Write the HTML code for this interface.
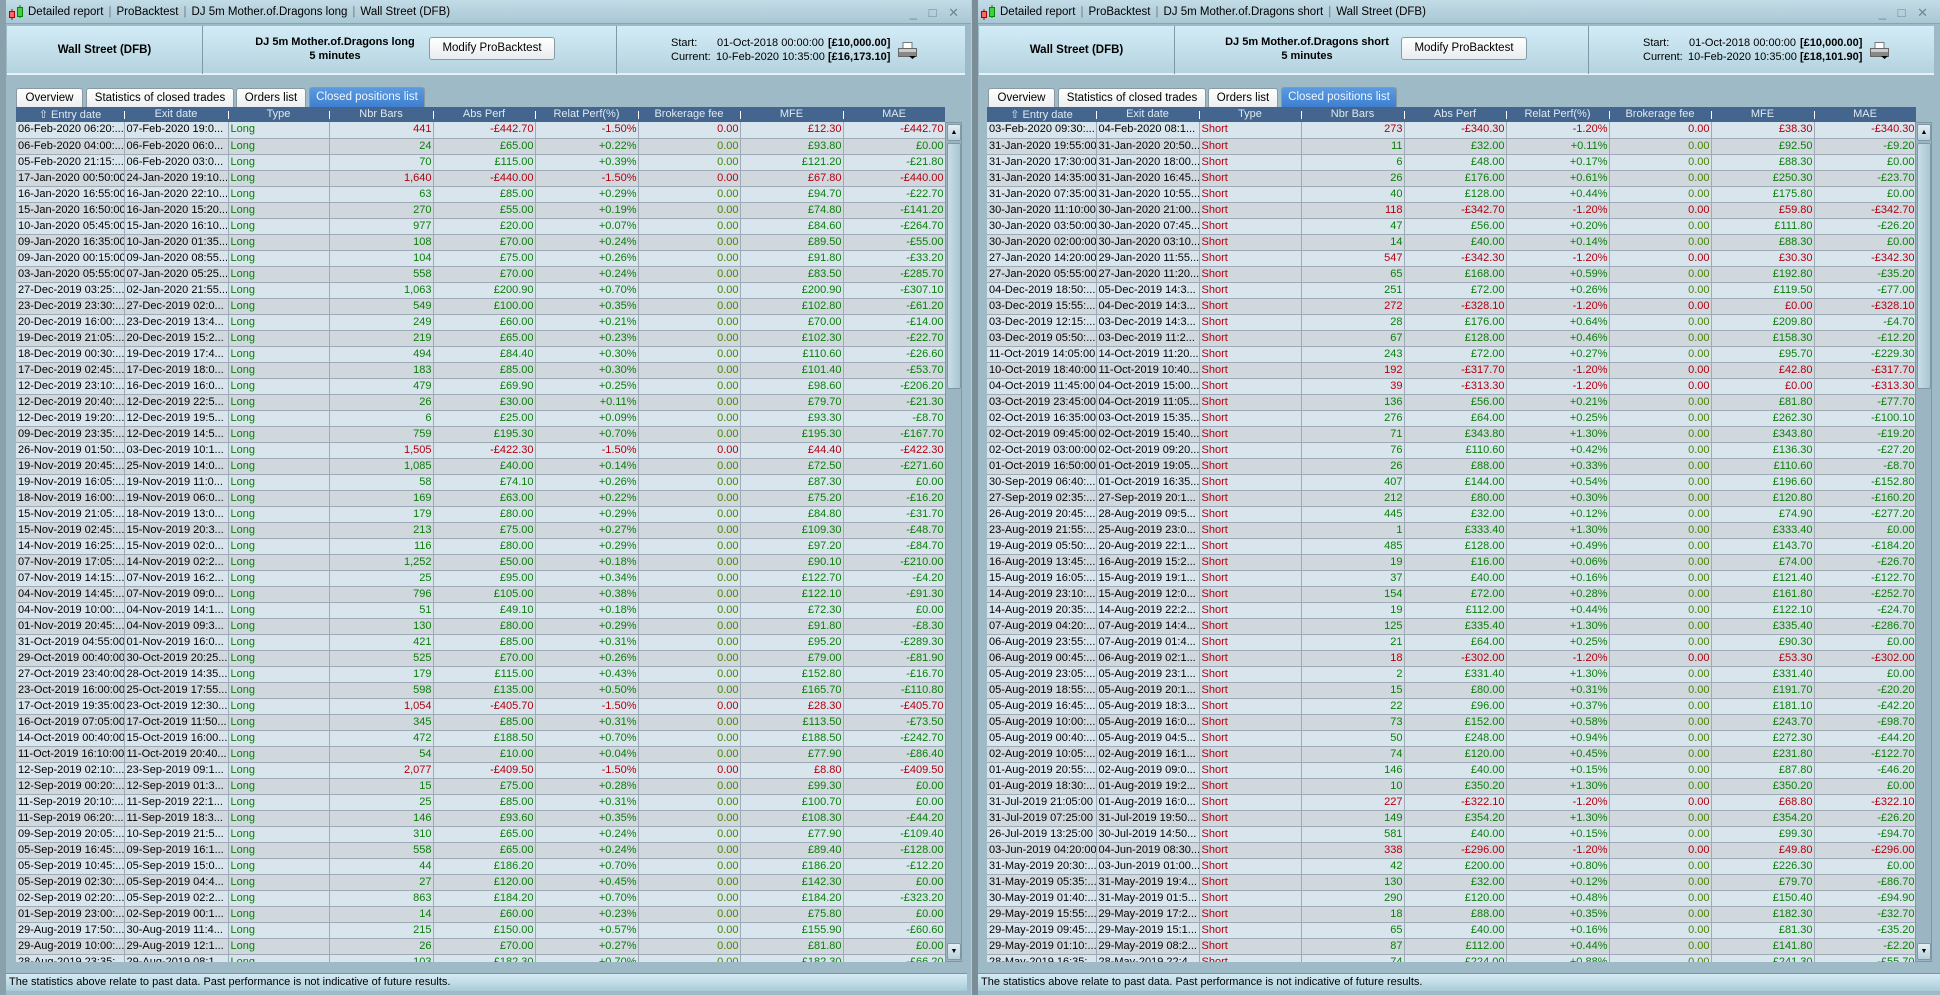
<!DOCTYPE html>
<html><head><meta charset="utf-8"><style>
*{box-sizing:border-box;margin:0;padding:0}
body{width:1940px;height:995px;overflow:hidden;background:#7f939d;font-family:"Liberation Sans",sans-serif;font-size:11px;color:#000;position:relative}
.p{position:absolute;top:0;height:995px;background:#9fbac7}
.tb{position:absolute;left:0;right:0;top:0;height:24px;background:linear-gradient(#c3dce7,#a9c7d4);border-bottom:1px solid #8aa4b0}
.tb .t{position:absolute;left:22px;top:6px;font-size:11.5px;white-space:nowrap}
.tb .t i{font-style:normal;color:#777;margin:0 5px}
.ic{position:absolute;left:2px;top:5px;width:18px;height:15px}
.wc{position:absolute;right:8px;top:5px;font-size:13px;color:#6f8792;letter-spacing:4px}
.hd{position:absolute;left:1px;right:6px;top:26px;height:49px;background:linear-gradient(#d3ecf7,#b4d3df);border-bottom:2px solid #e8f2f6}
.hd .s1{position:absolute;left:0;width:196px;top:0;height:48px;border-right:1px solid #7f9aa6;text-align:center;font-weight:bold;font-size:11.5px;line-height:48px}
.hd .s2{position:absolute;left:197px;width:413px;top:0;height:48px;border-right:1px solid #7f9aa6}
.hd .tt{position:absolute;left:0;width:262px;top:9px;text-align:center;font-weight:bold;font-size:11px;line-height:14px;white-space:nowrap}
.btn{position:absolute;left:225px;top:11px;width:126px;height:23px;background:linear-gradient(#fff,#e8ecee);border:1px solid #8a9aa3;border-radius:3px;text-align:center;line-height:21px;font-size:11.5px}
.sl{position:absolute;font-size:11px;white-space:nowrap;line-height:14px}
.pr{position:absolute;left:891px;top:16px}
.tabs{position:absolute;top:88px;height:19px}
.tab{position:absolute;top:0;height:19px;background:linear-gradient(#fff,#eceeef);border:1px solid #8a9aa3;border-bottom:none;border-radius:3px 3px 0 0;text-align:center;line-height:18px;font-size:11.5px}
.tab.a{background:linear-gradient(#5a9be0,#3f7fd0);color:#f0f6ff;top:-1px;height:20px}
table{position:absolute;left:10px;top:107px;border-collapse:collapse;table-layout:fixed;width:929px}
th{background:#44668e;color:#dfe8f2;font-weight:normal;height:15px;font-size:11px;border-bottom:1px solid #e6eef3;position:relative}
th+th:before{content:"";position:absolute;left:0;top:4px;height:8px;width:1px;background:#fff}
td{height:16px;border-right:1px solid #9eabb6;border-bottom:1px solid #9eabb6;white-space:nowrap;overflow:hidden;padding:0 1px 0 2px;font-size:11px;line-height:15px}
tr:nth-child(odd) td{background:#d9e5ed}tr:nth-child(even) td{background:#d0d8de}
td:nth-child(n+4){text-align:right}
td:nth-child(3),td:nth-child(n+4){color:#0a7d0a}
td:nth-child(7){color:#4a8200}
tr.l td:nth-child(n+4){color:#b00010}
.S td:nth-child(3){color:#b00010}
.tw{position:absolute;left:10px;top:122px;height:840px;width:929px;overflow:hidden}
.tw table{position:static}
.sb{position:absolute;left:939px;top:122px;width:17px;height:840px;background:#9bb5c2;border:1px solid #7e97a3}
.sb .u,.sb .d{position:absolute;left:1px;width:14px;height:17px;background:linear-gradient(#e4eff4,#b9d0da);border:1px solid #7f98a4;border-radius:2px;font-size:7px;text-align:center;line-height:15px}
.sb .u{top:1px}.sb .d{bottom:1px}
.sb .th{position:absolute;left:1px;top:20px;width:14px;height:246px;background:linear-gradient(90deg,#c9dde6,#aac6d2);border:1px solid #7f98a4;border-radius:2px}
.ft{position:absolute;left:0;right:4px;top:973px;height:18px;background:linear-gradient(#d7ecf5,#a9cbd8);border-top:1px solid #7a939f;padding-left:3px;line-height:17px;font-size:11px}
</style></head><body>

<div class="p" style="left:0;width:971px">
<div style="position:absolute;left:0;top:0;width:6px;height:995px;background:#8aa1ac"></div>
<div style="position:absolute;left:6px;top:0;width:965px;height:995px">
<div class="tb"><svg class="ic" viewBox="0 0 18 15"><line x1="4" y1="4" x2="4" y2="15" stroke="#b00"/><rect x="1.5" y="6.5" width="5" height="6" fill="#f66" stroke="#a00"/><line x1="12" y1="0" x2="12" y2="13" stroke="#080"/><rect x="9.5" y="2.5" width="5" height="9" fill="#4c4" stroke="#080"/></svg><div class="t">Detailed report<i>|</i>ProBacktest<i>|</i>DJ 5m Mother.of.Dragons long<i>|</i>Wall Street (DFB)</div><div class="wc">_ □ ✕</div></div>
<div class="hd"><div class="s1">Wall Street (DFB)</div><div class="s2"><div class="tt">DJ 5m Mother.of.Dragons long<br>5 minutes</div><div class="btn">Modify ProBacktest</div></div>
<div class="sl" style="left:664px;top:10px">Start:</div><div class="sl" style="left:664px;top:24px">Current:</div>
<div class="sl" style="left:710px;top:10px">01-Oct-2018 00:00:00</div><div class="sl" style="left:709px;top:24px">10-Feb-2020 10:35:00</div>
<div class="sl" style="left:821px;top:10px"><b>[£10,000.00]</b></div><div class="sl" style="left:821px;top:24px"><b>[£16,173.10]</b></div>
<svg class="pr" width="20" height="18" viewBox="0 0 20 18"><rect x="5" y="0.5" width="9" height="6" fill="#fff" stroke="#777"/><rect x="0.5" y="6.5" width="18" height="8" fill="#c7ccd0" stroke="#666"/><rect x="1" y="10" width="17" height="4" fill="#888"/><path d="M11 14h7l-3.5 3z" fill="#000"/></svg></div>
<div class="tabs"><div class="tab" style="left:10px;width:67px">Overview</div><div class="tab" style="left:80px;width:148px">Statistics of closed trades</div><div class="tab" style="left:230px;width:70px">Orders list</div><div class="tab a" style="left:303px;width:116px">Closed positions list</div></div>
<table><colgroup><col style="width:108px"><col style="width:104px"><col style="width:101px"><col style="width:104px"><col style="width:102px"><col style="width:103px"><col style="width:102px"><col style="width:103px"><col style="width:102px"></colgroup><tr><th>⇧ Entry date</th><th>Exit date</th><th>Type</th><th>Nbr Bars</th><th>Abs Perf</th><th>Relat Perf(%)</th><th>Brokerage fee</th><th>MFE</th><th>MAE</th></tr></table>
<div class="tw"><table><colgroup><col style="width:108px"><col style="width:104px"><col style="width:101px"><col style="width:104px"><col style="width:102px"><col style="width:103px"><col style="width:102px"><col style="width:103px"><col style="width:102px"></colgroup>
<tr class=l><td>06-Feb-2020 06:20:...<td>07-Feb-2020 19:0...<td>Long<td>441<td>-£442.70<td>-1.50%<td>0.00<td>£12.30<td>-£442.70
<tr><td>06-Feb-2020 04:00:...<td>06-Feb-2020 06:0...<td>Long<td>24<td>£65.00<td>+0.22%<td>0.00<td>£93.80<td>£0.00
<tr><td>05-Feb-2020 21:15:...<td>06-Feb-2020 03:0...<td>Long<td>70<td>£115.00<td>+0.39%<td>0.00<td>£121.20<td>-£21.80
<tr class=l><td>17-Jan-2020 00:50:00<td>24-Jan-2020 19:10...<td>Long<td>1,640<td>-£440.00<td>-1.50%<td>0.00<td>£67.80<td>-£440.00
<tr><td>16-Jan-2020 16:55:00<td>16-Jan-2020 22:10...<td>Long<td>63<td>£85.00<td>+0.29%<td>0.00<td>£94.70<td>-£22.70
<tr><td>15-Jan-2020 16:50:00<td>16-Jan-2020 15:20...<td>Long<td>270<td>£55.00<td>+0.19%<td>0.00<td>£74.80<td>-£141.20
<tr><td>10-Jan-2020 05:45:00<td>15-Jan-2020 16:10...<td>Long<td>977<td>£20.00<td>+0.07%<td>0.00<td>£84.60<td>-£264.70
<tr><td>09-Jan-2020 16:35:00<td>10-Jan-2020 01:35...<td>Long<td>108<td>£70.00<td>+0.24%<td>0.00<td>£89.50<td>-£55.00
<tr><td>09-Jan-2020 00:15:00<td>09-Jan-2020 08:55...<td>Long<td>104<td>£75.00<td>+0.26%<td>0.00<td>£91.80<td>-£33.20
<tr><td>03-Jan-2020 05:55:00<td>07-Jan-2020 05:25...<td>Long<td>558<td>£70.00<td>+0.24%<td>0.00<td>£83.50<td>-£285.70
<tr><td>27-Dec-2019 03:25:...<td>02-Jan-2020 21:55...<td>Long<td>1,063<td>£200.90<td>+0.70%<td>0.00<td>£200.90<td>-£307.10
<tr><td>23-Dec-2019 23:30:...<td>27-Dec-2019 02:0...<td>Long<td>549<td>£100.00<td>+0.35%<td>0.00<td>£102.80<td>-£61.20
<tr><td>20-Dec-2019 16:00:...<td>23-Dec-2019 13:4...<td>Long<td>249<td>£60.00<td>+0.21%<td>0.00<td>£70.00<td>-£14.00
<tr><td>19-Dec-2019 21:05:...<td>20-Dec-2019 15:2...<td>Long<td>219<td>£65.00<td>+0.23%<td>0.00<td>£102.30<td>-£22.70
<tr><td>18-Dec-2019 00:30:...<td>19-Dec-2019 17:4...<td>Long<td>494<td>£84.40<td>+0.30%<td>0.00<td>£110.60<td>-£26.60
<tr><td>17-Dec-2019 02:45:...<td>17-Dec-2019 18:0...<td>Long<td>183<td>£85.00<td>+0.30%<td>0.00<td>£101.40<td>-£53.70
<tr><td>12-Dec-2019 23:10:...<td>16-Dec-2019 16:0...<td>Long<td>479<td>£69.90<td>+0.25%<td>0.00<td>£98.60<td>-£206.20
<tr><td>12-Dec-2019 20:40:...<td>12-Dec-2019 22:5...<td>Long<td>26<td>£30.00<td>+0.11%<td>0.00<td>£79.70<td>-£21.30
<tr><td>12-Dec-2019 19:20:...<td>12-Dec-2019 19:5...<td>Long<td>6<td>£25.00<td>+0.09%<td>0.00<td>£93.30<td>-£8.70
<tr><td>09-Dec-2019 23:35:...<td>12-Dec-2019 14:5...<td>Long<td>759<td>£195.30<td>+0.70%<td>0.00<td>£195.30<td>-£167.70
<tr class=l><td>26-Nov-2019 01:50:...<td>03-Dec-2019 10:1...<td>Long<td>1,505<td>-£422.30<td>-1.50%<td>0.00<td>£44.40<td>-£422.30
<tr><td>19-Nov-2019 20:45:...<td>25-Nov-2019 14:0...<td>Long<td>1,085<td>£40.00<td>+0.14%<td>0.00<td>£72.50<td>-£271.60
<tr><td>19-Nov-2019 16:05:...<td>19-Nov-2019 11:0...<td>Long<td>58<td>£74.10<td>+0.26%<td>0.00<td>£87.30<td>£0.00
<tr><td>18-Nov-2019 16:00:...<td>19-Nov-2019 06:0...<td>Long<td>169<td>£63.00<td>+0.22%<td>0.00<td>£75.20<td>-£16.20
<tr><td>15-Nov-2019 21:05:...<td>18-Nov-2019 13:0...<td>Long<td>179<td>£80.00<td>+0.29%<td>0.00<td>£84.80<td>-£31.70
<tr><td>15-Nov-2019 02:45:...<td>15-Nov-2019 20:3...<td>Long<td>213<td>£75.00<td>+0.27%<td>0.00<td>£109.30<td>-£48.70
<tr><td>14-Nov-2019 16:25:...<td>15-Nov-2019 02:0...<td>Long<td>116<td>£80.00<td>+0.29%<td>0.00<td>£97.20<td>-£84.70
<tr><td>07-Nov-2019 17:05:...<td>14-Nov-2019 02:2...<td>Long<td>1,252<td>£50.00<td>+0.18%<td>0.00<td>£90.10<td>-£210.00
<tr><td>07-Nov-2019 14:15:...<td>07-Nov-2019 16:2...<td>Long<td>25<td>£95.00<td>+0.34%<td>0.00<td>£122.70<td>-£4.20
<tr><td>04-Nov-2019 14:45:...<td>07-Nov-2019 09:0...<td>Long<td>796<td>£105.00<td>+0.38%<td>0.00<td>£122.10<td>-£91.30
<tr><td>04-Nov-2019 10:00:...<td>04-Nov-2019 14:1...<td>Long<td>51<td>£49.10<td>+0.18%<td>0.00<td>£72.30<td>£0.00
<tr><td>01-Nov-2019 20:45:...<td>04-Nov-2019 09:3...<td>Long<td>130<td>£80.00<td>+0.29%<td>0.00<td>£91.80<td>-£8.30
<tr><td>31-Oct-2019 04:55:00<td>01-Nov-2019 16:0...<td>Long<td>421<td>£85.00<td>+0.31%<td>0.00<td>£95.20<td>-£289.30
<tr><td>29-Oct-2019 00:40:00<td>30-Oct-2019 20:25...<td>Long<td>525<td>£70.00<td>+0.26%<td>0.00<td>£79.00<td>-£81.90
<tr><td>27-Oct-2019 23:40:00<td>28-Oct-2019 14:35...<td>Long<td>179<td>£115.00<td>+0.43%<td>0.00<td>£152.80<td>-£16.70
<tr><td>23-Oct-2019 16:00:00<td>25-Oct-2019 17:55...<td>Long<td>598<td>£135.00<td>+0.50%<td>0.00<td>£165.70<td>-£110.80
<tr class=l><td>17-Oct-2019 19:35:00<td>23-Oct-2019 12:30...<td>Long<td>1,054<td>-£405.70<td>-1.50%<td>0.00<td>£28.30<td>-£405.70
<tr><td>16-Oct-2019 07:05:00<td>17-Oct-2019 11:50...<td>Long<td>345<td>£85.00<td>+0.31%<td>0.00<td>£113.50<td>-£73.50
<tr><td>14-Oct-2019 00:40:00<td>15-Oct-2019 16:00...<td>Long<td>472<td>£188.50<td>+0.70%<td>0.00<td>£188.50<td>-£242.70
<tr><td>11-Oct-2019 16:10:00<td>11-Oct-2019 20:40...<td>Long<td>54<td>£10.00<td>+0.04%<td>0.00<td>£77.90<td>-£86.40
<tr class=l><td>12-Sep-2019 02:10:...<td>23-Sep-2019 09:1...<td>Long<td>2,077<td>-£409.50<td>-1.50%<td>0.00<td>£8.80<td>-£409.50
<tr><td>12-Sep-2019 00:20:...<td>12-Sep-2019 01:3...<td>Long<td>15<td>£75.00<td>+0.28%<td>0.00<td>£99.30<td>£0.00
<tr><td>11-Sep-2019 20:10:...<td>11-Sep-2019 22:1...<td>Long<td>25<td>£85.00<td>+0.31%<td>0.00<td>£100.70<td>£0.00
<tr><td>11-Sep-2019 06:20:...<td>11-Sep-2019 18:3...<td>Long<td>146<td>£93.60<td>+0.35%<td>0.00<td>£108.30<td>-£44.20
<tr><td>09-Sep-2019 20:05:...<td>10-Sep-2019 21:5...<td>Long<td>310<td>£65.00<td>+0.24%<td>0.00<td>£77.90<td>-£109.40
<tr><td>05-Sep-2019 16:45:...<td>09-Sep-2019 16:1...<td>Long<td>558<td>£65.00<td>+0.24%<td>0.00<td>£89.40<td>-£128.00
<tr><td>05-Sep-2019 10:45:...<td>05-Sep-2019 15:0...<td>Long<td>44<td>£186.20<td>+0.70%<td>0.00<td>£186.20<td>-£12.20
<tr><td>05-Sep-2019 02:30:...<td>05-Sep-2019 04:4...<td>Long<td>27<td>£120.00<td>+0.45%<td>0.00<td>£142.30<td>£0.00
<tr><td>02-Sep-2019 02:20:...<td>05-Sep-2019 02:2...<td>Long<td>863<td>£184.20<td>+0.70%<td>0.00<td>£184.20<td>-£323.20
<tr><td>01-Sep-2019 23:00:...<td>02-Sep-2019 00:1...<td>Long<td>14<td>£60.00<td>+0.23%<td>0.00<td>£75.80<td>£0.00
<tr><td>29-Aug-2019 17:50:...<td>30-Aug-2019 11:4...<td>Long<td>215<td>£150.00<td>+0.57%<td>0.00<td>£155.90<td>-£60.60
<tr><td>29-Aug-2019 10:00:...<td>29-Aug-2019 12:1...<td>Long<td>26<td>£70.00<td>+0.27%<td>0.00<td>£81.80<td>£0.00
<tr><td>28-Aug-2019 23:35:...<td>29-Aug-2019 08:1...<td>Long<td>103<td>£182.30<td>+0.70%<td>0.00<td>£182.30<td>-£66.20
</table></div>
<div class="sb"><div class="u">▲</div><div class="th"></div><div class="d">▼</div></div>
<div class="ft">The statistics above relate to past data. Past performance is not indicative of future results.</div>
</div></div>

<div style="position:absolute;left:971px;top:0;width:7px;height:995px;background:#7b8e98;border-left:1px solid #b9ccd5"></div>

<div class="p S" style="left:978px;width:962px">
<div class="tb"><svg class="ic" viewBox="0 0 18 15"><line x1="4" y1="4" x2="4" y2="15" stroke="#b00"/><rect x="1.5" y="6.5" width="5" height="6" fill="#f66" stroke="#a00"/><line x1="12" y1="0" x2="12" y2="13" stroke="#080"/><rect x="9.5" y="2.5" width="5" height="9" fill="#4c4" stroke="#080"/></svg><div class="t">Detailed report<i>|</i>ProBacktest<i>|</i>DJ 5m Mother.of.Dragons short<i>|</i>Wall Street (DFB)</div><div class="wc">_ □ ✕</div></div>
<div class="hd"><div class="s1">Wall Street (DFB)</div><div class="s2"><div class="tt">DJ 5m Mother.of.Dragons short<br>5 minutes</div><div class="btn">Modify ProBacktest</div></div>
<div class="sl" style="left:664px;top:10px">Start:</div><div class="sl" style="left:664px;top:24px">Current:</div>
<div class="sl" style="left:710px;top:10px">01-Oct-2018 00:00:00</div><div class="sl" style="left:709px;top:24px">10-Feb-2020 10:35:00</div>
<div class="sl" style="left:821px;top:10px"><b>[£10,000.00]</b></div><div class="sl" style="left:821px;top:24px"><b>[£18,101.90]</b></div>
<svg class="pr" width="20" height="18" viewBox="0 0 20 18"><rect x="5" y="0.5" width="9" height="6" fill="#fff" stroke="#777"/><rect x="0.5" y="6.5" width="18" height="8" fill="#c7ccd0" stroke="#666"/><rect x="1" y="10" width="17" height="4" fill="#888"/><path d="M11 14h7l-3.5 3z" fill="#000"/></svg></div>
<div class="tabs"><div class="tab" style="left:10px;width:67px">Overview</div><div class="tab" style="left:80px;width:148px">Statistics of closed trades</div><div class="tab" style="left:230px;width:70px">Orders list</div><div class="tab a" style="left:303px;width:116px">Closed positions list</div></div>
<table style="left:9px"><colgroup><col style="width:109px"><col style="width:103px"><col style="width:102px"><col style="width:103px"><col style="width:102px"><col style="width:103px"><col style="width:102px"><col style="width:103px"><col style="width:102px"></colgroup><tr><th>⇧ Entry date</th><th>Exit date</th><th>Type</th><th>Nbr Bars</th><th>Abs Perf</th><th>Relat Perf(%)</th><th>Brokerage fee</th><th>MFE</th><th>MAE</th></tr></table>
<div class="tw" style="left:9px"><table><colgroup><col style="width:109px"><col style="width:103px"><col style="width:102px"><col style="width:103px"><col style="width:102px"><col style="width:103px"><col style="width:102px"><col style="width:103px"><col style="width:102px"></colgroup>
<tr class=l><td>03-Feb-2020 09:30:...<td>04-Feb-2020 08:1...<td>Short<td>273<td>-£340.30<td>-1.20%<td>0.00<td>£38.30<td>-£340.30
<tr><td>31-Jan-2020 19:55:00<td>31-Jan-2020 20:50...<td>Short<td>11<td>£32.00<td>+0.11%<td>0.00<td>£92.50<td>-£9.20
<tr><td>31-Jan-2020 17:30:00<td>31-Jan-2020 18:00...<td>Short<td>6<td>£48.00<td>+0.17%<td>0.00<td>£88.30<td>£0.00
<tr><td>31-Jan-2020 14:35:00<td>31-Jan-2020 16:45...<td>Short<td>26<td>£176.00<td>+0.61%<td>0.00<td>£250.30<td>-£23.70
<tr><td>31-Jan-2020 07:35:00<td>31-Jan-2020 10:55...<td>Short<td>40<td>£128.00<td>+0.44%<td>0.00<td>£175.80<td>£0.00
<tr class=l><td>30-Jan-2020 11:10:00<td>30-Jan-2020 21:00...<td>Short<td>118<td>-£342.70<td>-1.20%<td>0.00<td>£59.80<td>-£342.70
<tr><td>30-Jan-2020 03:50:00<td>30-Jan-2020 07:45...<td>Short<td>47<td>£56.00<td>+0.20%<td>0.00<td>£111.80<td>-£26.20
<tr><td>30-Jan-2020 02:00:00<td>30-Jan-2020 03:10...<td>Short<td>14<td>£40.00<td>+0.14%<td>0.00<td>£88.30<td>£0.00
<tr class=l><td>27-Jan-2020 14:20:00<td>29-Jan-2020 11:55...<td>Short<td>547<td>-£342.30<td>-1.20%<td>0.00<td>£30.30<td>-£342.30
<tr><td>27-Jan-2020 05:55:00<td>27-Jan-2020 11:20...<td>Short<td>65<td>£168.00<td>+0.59%<td>0.00<td>£192.80<td>-£35.20
<tr><td>04-Dec-2019 18:50:...<td>05-Dec-2019 14:3...<td>Short<td>251<td>£72.00<td>+0.26%<td>0.00<td>£119.50<td>-£77.00
<tr class=l><td>03-Dec-2019 15:55:...<td>04-Dec-2019 14:3...<td>Short<td>272<td>-£328.10<td>-1.20%<td>0.00<td>£0.00<td>-£328.10
<tr><td>03-Dec-2019 12:15:...<td>03-Dec-2019 14:3...<td>Short<td>28<td>£176.00<td>+0.64%<td>0.00<td>£209.80<td>-£4.70
<tr><td>03-Dec-2019 05:50:...<td>03-Dec-2019 11:2...<td>Short<td>67<td>£128.00<td>+0.46%<td>0.00<td>£158.30<td>-£12.20
<tr><td>11-Oct-2019 14:05:00<td>14-Oct-2019 11:20...<td>Short<td>243<td>£72.00<td>+0.27%<td>0.00<td>£95.70<td>-£229.30
<tr class=l><td>10-Oct-2019 18:40:00<td>11-Oct-2019 10:40...<td>Short<td>192<td>-£317.70<td>-1.20%<td>0.00<td>£42.80<td>-£317.70
<tr class=l><td>04-Oct-2019 11:45:00<td>04-Oct-2019 15:00...<td>Short<td>39<td>-£313.30<td>-1.20%<td>0.00<td>£0.00<td>-£313.30
<tr><td>03-Oct-2019 23:45:00<td>04-Oct-2019 11:05...<td>Short<td>136<td>£56.00<td>+0.21%<td>0.00<td>£81.80<td>-£77.70
<tr><td>02-Oct-2019 16:35:00<td>03-Oct-2019 15:35...<td>Short<td>276<td>£64.00<td>+0.25%<td>0.00<td>£262.30<td>-£100.10
<tr><td>02-Oct-2019 09:45:00<td>02-Oct-2019 15:40...<td>Short<td>71<td>£343.80<td>+1.30%<td>0.00<td>£343.80<td>-£19.20
<tr><td>02-Oct-2019 03:00:00<td>02-Oct-2019 09:20...<td>Short<td>76<td>£110.60<td>+0.42%<td>0.00<td>£136.30<td>-£27.20
<tr><td>01-Oct-2019 16:50:00<td>01-Oct-2019 19:05...<td>Short<td>26<td>£88.00<td>+0.33%<td>0.00<td>£110.60<td>-£8.70
<tr><td>30-Sep-2019 06:40:...<td>01-Oct-2019 16:35...<td>Short<td>407<td>£144.00<td>+0.54%<td>0.00<td>£196.60<td>-£152.80
<tr><td>27-Sep-2019 02:35:...<td>27-Sep-2019 20:1...<td>Short<td>212<td>£80.00<td>+0.30%<td>0.00<td>£120.80<td>-£160.20
<tr><td>26-Aug-2019 20:45:...<td>28-Aug-2019 09:5...<td>Short<td>445<td>£32.00<td>+0.12%<td>0.00<td>£74.90<td>-£277.20
<tr><td>23-Aug-2019 21:55:...<td>25-Aug-2019 23:0...<td>Short<td>1<td>£333.40<td>+1.30%<td>0.00<td>£333.40<td>£0.00
<tr><td>19-Aug-2019 05:50:...<td>20-Aug-2019 22:1...<td>Short<td>485<td>£128.00<td>+0.49%<td>0.00<td>£143.70<td>-£184.20
<tr><td>16-Aug-2019 13:45:...<td>16-Aug-2019 15:2...<td>Short<td>19<td>£16.00<td>+0.06%<td>0.00<td>£74.00<td>-£26.70
<tr><td>15-Aug-2019 16:05:...<td>15-Aug-2019 19:1...<td>Short<td>37<td>£40.00<td>+0.16%<td>0.00<td>£121.40<td>-£122.70
<tr><td>14-Aug-2019 23:10:...<td>15-Aug-2019 12:0...<td>Short<td>154<td>£72.00<td>+0.28%<td>0.00<td>£161.80<td>-£252.70
<tr><td>14-Aug-2019 20:35:...<td>14-Aug-2019 22:2...<td>Short<td>19<td>£112.00<td>+0.44%<td>0.00<td>£122.10<td>-£24.70
<tr><td>07-Aug-2019 04:20:...<td>07-Aug-2019 14:4...<td>Short<td>125<td>£335.40<td>+1.30%<td>0.00<td>£335.40<td>-£286.70
<tr><td>06-Aug-2019 23:55:...<td>07-Aug-2019 01:4...<td>Short<td>21<td>£64.00<td>+0.25%<td>0.00<td>£90.30<td>£0.00
<tr class=l><td>06-Aug-2019 00:45:...<td>06-Aug-2019 02:1...<td>Short<td>18<td>-£302.00<td>-1.20%<td>0.00<td>£53.30<td>-£302.00
<tr><td>05-Aug-2019 23:05:...<td>05-Aug-2019 23:1...<td>Short<td>2<td>£331.40<td>+1.30%<td>0.00<td>£331.40<td>£0.00
<tr><td>05-Aug-2019 18:55:...<td>05-Aug-2019 20:1...<td>Short<td>15<td>£80.00<td>+0.31%<td>0.00<td>£191.70<td>-£20.20
<tr><td>05-Aug-2019 16:45:...<td>05-Aug-2019 18:3...<td>Short<td>22<td>£96.00<td>+0.37%<td>0.00<td>£181.10<td>-£42.20
<tr><td>05-Aug-2019 10:00:...<td>05-Aug-2019 16:0...<td>Short<td>73<td>£152.00<td>+0.58%<td>0.00<td>£243.70<td>-£98.70
<tr><td>05-Aug-2019 00:40:...<td>05-Aug-2019 04:5...<td>Short<td>50<td>£248.00<td>+0.94%<td>0.00<td>£272.30<td>-£44.20
<tr><td>02-Aug-2019 10:05:...<td>02-Aug-2019 16:1...<td>Short<td>74<td>£120.00<td>+0.45%<td>0.00<td>£231.80<td>-£122.70
<tr><td>01-Aug-2019 20:55:...<td>02-Aug-2019 09:0...<td>Short<td>146<td>£40.00<td>+0.15%<td>0.00<td>£87.80<td>-£46.20
<tr><td>01-Aug-2019 18:30:...<td>01-Aug-2019 19:2...<td>Short<td>10<td>£350.20<td>+1.30%<td>0.00<td>£350.20<td>£0.00
<tr class=l><td>31-Jul-2019 21:05:00<td>01-Aug-2019 16:0...<td>Short<td>227<td>-£322.10<td>-1.20%<td>0.00<td>£68.80<td>-£322.10
<tr><td>31-Jul-2019 07:25:00<td>31-Jul-2019 19:50...<td>Short<td>149<td>£354.20<td>+1.30%<td>0.00<td>£354.20<td>-£26.20
<tr><td>26-Jul-2019 13:25:00<td>30-Jul-2019 14:50...<td>Short<td>581<td>£40.00<td>+0.15%<td>0.00<td>£99.30<td>-£94.70
<tr class=l><td>03-Jun-2019 04:20:00<td>04-Jun-2019 08:30...<td>Short<td>338<td>-£296.00<td>-1.20%<td>0.00<td>£49.80<td>-£296.00
<tr><td>31-May-2019 20:30:...<td>03-Jun-2019 01:00...<td>Short<td>42<td>£200.00<td>+0.80%<td>0.00<td>£226.30<td>£0.00
<tr><td>31-May-2019 05:35:...<td>31-May-2019 19:4...<td>Short<td>130<td>£32.00<td>+0.12%<td>0.00<td>£79.70<td>-£86.70
<tr><td>30-May-2019 01:40:...<td>31-May-2019 01:5...<td>Short<td>290<td>£120.00<td>+0.48%<td>0.00<td>£150.40<td>-£94.90
<tr><td>29-May-2019 15:55:...<td>29-May-2019 17:2...<td>Short<td>18<td>£88.00<td>+0.35%<td>0.00<td>£182.30<td>-£32.70
<tr><td>29-May-2019 09:45:...<td>29-May-2019 15:1...<td>Short<td>65<td>£40.00<td>+0.16%<td>0.00<td>£81.30<td>-£35.20
<tr><td>29-May-2019 01:10:...<td>29-May-2019 08:2...<td>Short<td>87<td>£112.00<td>+0.44%<td>0.00<td>£141.80<td>-£2.20
<tr><td>28-May-2019 16:35:...<td>28-May-2019 22:4...<td>Short<td>74<td>£224.00<td>+0.88%<td>0.00<td>£241.30<td>-£55.70
</table></div>
<div class="sb" style="left:937px"><div class="u">▲</div><div class="th"></div><div class="d">▼</div></div>
<div class="ft" style="right:0">The statistics above relate to past data. Past performance is not indicative of future results.</div>
</div>
</body></html>
